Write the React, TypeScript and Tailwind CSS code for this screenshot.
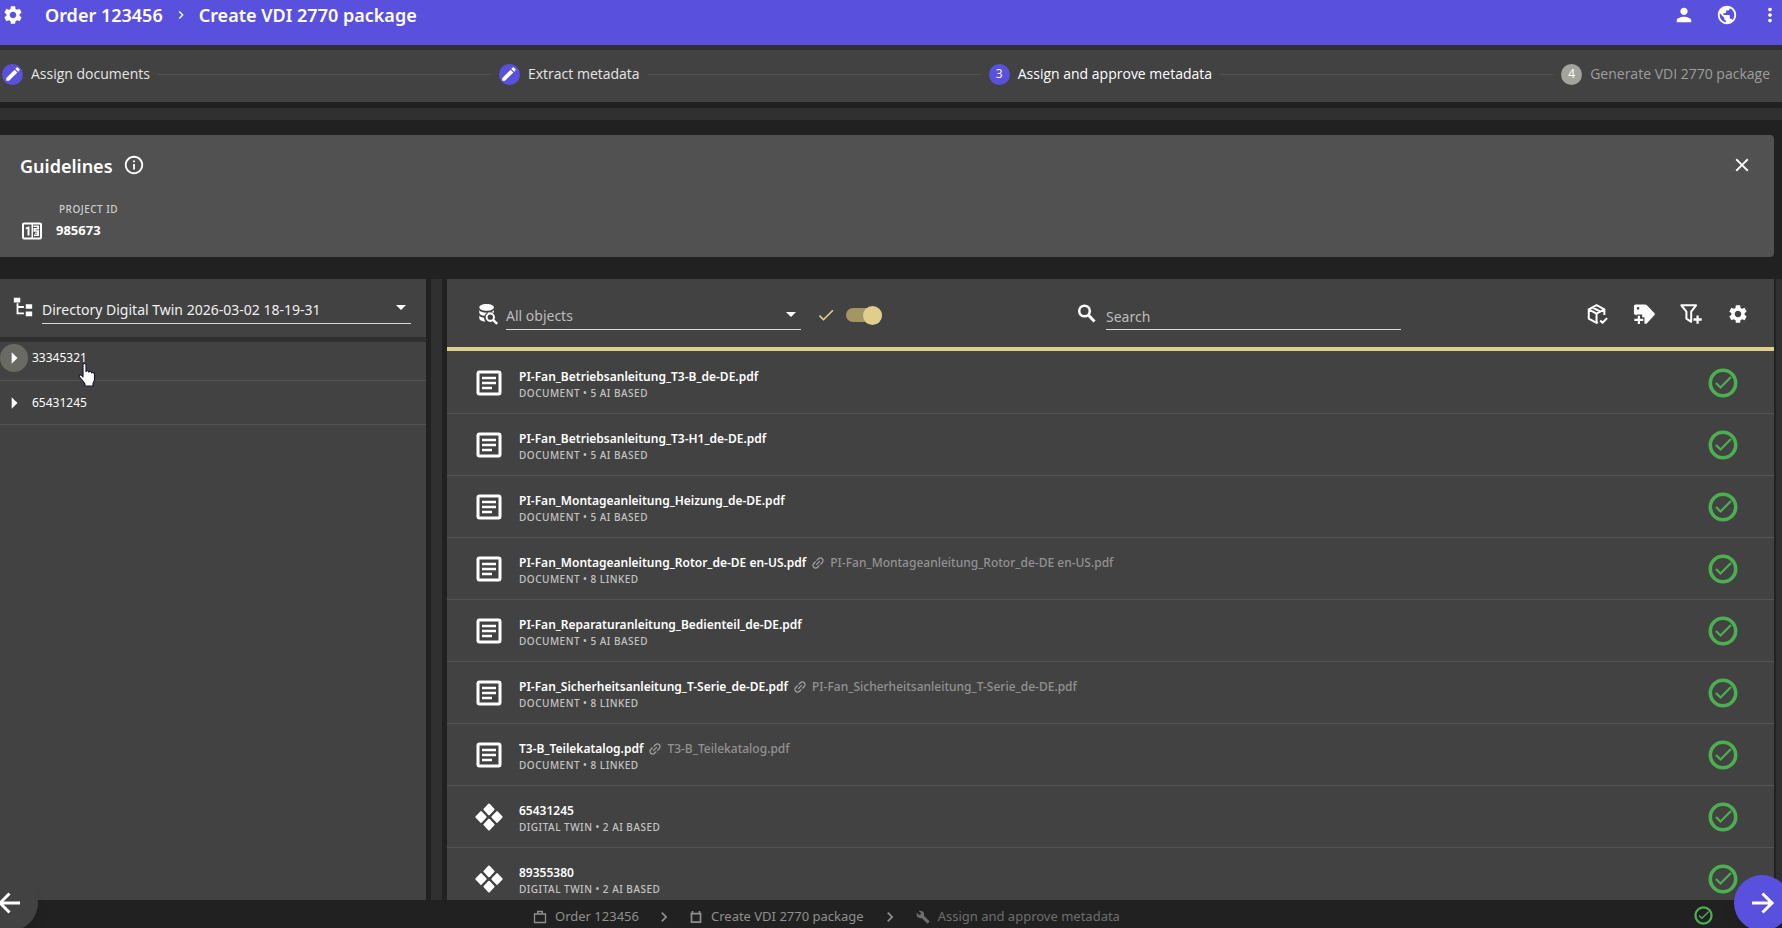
import React from 'react';
import { MdSettings, MdPerson, MdPublic, MdMoreVert, MdEdit, MdInfoOutline, MdClose, MdArrowDropDown, MdCheck, MdChevronRight, MdBuild, MdArrowRight, MdLink } from 'react-icons/md';

type IconProps = { className?: string };

const Counter = ({ className }: IconProps) => (
  <svg viewBox="0 0 24 24" className={className} fill="currentColor" aria-hidden="true">
    <path fillRule="evenodd" d="M4 3.500h16a2 2 0 0 1 2 2v13a2 2 0 0 1-2 2H4a2 2 0 0 1-2-2v-13c0-1.100.9-2 2-2m0 2v13h7.500v-13zm9 0v13h7v-13z" />
    <path d="M9.500 16.500h-2V9.800l-1.700.7V8.600L9.500 7.200zM13.500 6.500h5.500v3.900h-3.500v.8h3.500v5.900h-5v-1.500h3.200v-.8H15v-1.300h2.200v-.8h-3.700V9h3.700v-.9h-3.700z" />
  </svg>
);

const Tree = ({ className }: IconProps) => (
  <svg viewBox="0 0 24 24" className={className} fill="currentColor" aria-hidden="true">
    <path d="M2 2h7v5H2zm13 7h7v5h-7zm0 8h7v5h-7zm-2-4H7v5h6v2H5V8h2v3h6z" />
  </svg>
);

const DatabaseSearch = ({ className }: IconProps) => (
  <svg viewBox="0 0 24 24" className={className} fill="currentColor" aria-hidden="true">
    <path d="M10.500 1C6 1 2.500 2.600 2.500 4.700S6 8.500 10.500 8.500s8-1.700 8-3.800S15 1 10.500 1M2.500 7.500v3c0 1.700 2.300 3 5.600 3.500a6.800 6.800 0 0 1 6.400-4.200l4 .9V7.500c-.8 1.800-4 3-8 3s-7.200-1.200-8-3M2.500 13.500v3c0 1.800 2.700 3.300 6.500 3.600A7 7 0 0 1 7.700 16c-2.600-.4-4.500-1.300-5.200-2.500" />
    <circle cx="14.500" cy="15.500" r="4" fill="none" stroke="currentColor" strokeWidth="2.200" />
    <path d="M17.500 18.500l4.500 4.300" fill="none" stroke="currentColor" strokeWidth="2.600" />
  </svg>
);

const SearchIcon = ({ className }: IconProps) => (
  <svg viewBox="0 0 22 22" className={className} fill="none" stroke="currentColor" aria-hidden="true">
    <circle cx="8.500" cy="8" r="5.300" strokeWidth="2.500" />
    <path d="M12.300 12l6.200 6.500" strokeWidth="3" />
  </svg>
);

const ArrowIcon = ({ className }: IconProps) => (
  <svg viewBox="0 0 28 28" className={className} fill="none" stroke="currentColor" strokeWidth="3" aria-hidden="true">
    <path d="M4 14h19M14.500 4.500L24 14l-9.500 9.500" />
  </svg>
);

const PackageCheck = ({ className }: IconProps) => (
  <svg viewBox="0 0 24 24" className={className} fill="none" stroke="currentColor" strokeWidth="2.200" strokeLinejoin="round" aria-hidden="true">
    <path d="M20 13V7L11.500 2.400 3 7v10l8.500 4.700 1.500-.8M3 7l8.500 4.700L20 7M11.500 12v9.500M7.200 4.900l8.500 4.600" />
    <path d="M15.500 19l2.500 2.500 5-5" />
  </svg>
);

const TagPlus = ({ className }: IconProps) => (
  <svg viewBox="0 0 24 24" className={className} fill="currentColor" aria-hidden="true">
    <path fillRule="evenodd" d="M3 1.500h10.500c.6 0 1 .2 1.400.6l8.600 9.200c.5.600.5 1.300 0 1.900l-8 8.700c-.4.400-.8.600-1.400.6H12.500v-7H10V12.500H4V13.500L1 12V3.500c0-1.100.9-2 2-2m2.500 2.800a1.500 1.500 0 1 0 0 3 1.500 1.500 0 0 0 0-3" />
    <path d="M5.200 14h2.400v3.300h3.600v2.400H7.600V23H5.200v-3.300H1.500v-2.400h3.700z" />
  </svg>
);

const FilterPlus = ({ className }: IconProps) => (
  <svg viewBox="0 0 24 24" className={className} fill="none" stroke="currentColor" strokeWidth="2.200" strokeLinejoin="round" aria-hidden="true">
    <path d="M1.500 2.500h16l-5.300 7v11L7 17V9.500z" />
    <path d="M19.200 13.500v9M14.700 18h9" strokeWidth="2.500" />
  </svg>
);

const DocumentIcon = ({ className }: IconProps) => (
  <svg viewBox="0 0 28 28" className={className} fill="none" stroke="currentColor" strokeWidth="3" aria-hidden="true">
    <rect x="3" y="3" width="22" height="22" rx="1.500" />
    <path d="M7 9h14M7 14h14M7 19h10" strokeWidth="2.600" />
  </svg>
);

const TwinIcon = ({ className }: IconProps) => (
  <svg viewBox="0 0 28 28" className={className} fill="currentColor" stroke="currentColor" strokeWidth="2" strokeLinejoin="round" aria-hidden="true">
    <path d="M14 1.500l4.600 4.900-4.600 4.900-4.600-4.900zM14 16.700l4.600 4.900-4.600 4.900-4.600-4.900zM6 9.100l4.600 4.900L6 18.900 1.400 14zM22 9.100l4.600 4.900-4.600 4.900-4.600-4.900z" />
  </svg>
);

const Approved = ({ className }: IconProps) => (
  <svg viewBox="0 0 30 30" className={className} fill="none" stroke="currentColor" role="img" aria-label="Approved">
    <circle cx="15" cy="15" r="12.700" strokeWidth="3.600" />
    <path d="M8 15l4.500 4.500L23 9" strokeWidth="2.200" />
  </svg>
);

const Briefcase = ({ className }: IconProps) => (
  <svg viewBox="0 0 14 14" className={className} fill="none" stroke="currentColor" strokeWidth="1.300" aria-hidden="true">
    <path d="M1.500 4h11v8.500h-11zM4.700 4V1.500h4.600V4" />
  </svg>
);

const Clipboard = ({ className }: IconProps) => (
  <svg viewBox="0 0 14 14" className={className} fill="none" stroke="currentColor" strokeWidth="1.700" aria-hidden="true">
    <path d="M2.500 4v8.200h9V4M1.500 3.700h11M3.500 1v3M10.500 1v3" />
  </svg>
);

const HandPointer = ({ className }: IconProps) => (
  <svg viewBox="0 0 18 25" className={className} fill="white" stroke="#1b1b2b" strokeWidth="1.200" strokeLinejoin="round" aria-hidden="true">
    <path d="M5 2.500C5 .5 8 .5 8 2.500V9c.3-1.200 2.800-1 2.900.6.400-1.100 2.700-.8 2.800.8.700-.8 2.800-.3 2.800 1.400v5.200c0 1.800-1.500 3-1.500 4.500V23.500H7V22c0-1.700-3.400-4.300-5.500-7.500-1-1.700.8-2.800 2.100-1.600L5 14.300z" />
  </svg>
);

const steps = [
  { label: 'Assign documents', state: 'done' },
  { label: 'Extract metadata', state: 'done' },
  { label: 'Assign and approve metadata', state: 'current' },
  { label: 'Generate VDI 2770 package', state: 'pending' },
];

const rows: { name: string; meta: string; linked?: boolean; twin?: boolean }[] = [
  { name: 'PI-Fan_Betriebsanleitung_T3-B_de-DE.pdf', meta: 'DOCUMENT • 5 AI BASED' },
  { name: 'PI-Fan_Betriebsanleitung_T3-H1_de-DE.pdf', meta: 'DOCUMENT • 5 AI BASED' },
  { name: 'PI-Fan_Montageanleitung_Heizung_de-DE.pdf', meta: 'DOCUMENT • 5 AI BASED' },
  { name: 'PI-Fan_Montageanleitung_Rotor_de-DE en-US.pdf', meta: 'DOCUMENT • 8 LINKED', linked: true },
  { name: 'PI-Fan_Reparaturanleitung_Bedienteil_de-DE.pdf', meta: 'DOCUMENT • 5 AI BASED' },
  { name: 'PI-Fan_Sicherheitsanleitung_T-Serie_de-DE.pdf', meta: 'DOCUMENT • 8 LINKED', linked: true },
  { name: 'T3-B_Teilekatalog.pdf', meta: 'DOCUMENT • 8 LINKED', linked: true },
  { name: '65431245', meta: 'DIGITAL TWIN • 2 AI BASED', twin: true },
  { name: '89355380', meta: 'DIGITAL TWIN • 2 AI BASED', twin: true },
];

function Header() {
  return (
    <header className="flex h-[45px] shrink-0 items-start justify-between bg-[#5951de] pt-[3px] pr-px pl-0.5">
      <div className="flex h-6 items-center">
        <button aria-label="Settings"><MdSettings className="size-[22px]" /></button>
        <nav aria-label="Breadcrumb" className="ml-[21px] flex items-center text-lg font-semibold">
          <a href="#order">Order 123456</a>
          <MdChevronRight className="mx-2.5 size-4" />
          <a href="#package">Create VDI 2770 package</a>
        </nav>
      </div>
      <div className="flex h-6 items-center gap-[21px]">
        <button aria-label="Account"><MdPerson className="size-[22px]" /></button>
        <button aria-label="Language"><MdPublic className="size-[22px]" /></button>
        <button aria-label="More"><MdMoreVert className="size-[22px]" /></button>
      </div>
    </header>
  );
}

function Stepper() {
  return (
    <ol className="flex h-[57px] shrink-0 items-center gap-2 border-t-[5px] border-[#303030] bg-[#424242] pr-3 pb-1 pl-0.5 font-['Open_Sans',sans-serif] text-sm">
      {steps.map((step, i) => (
        <React.Fragment key={step.label}>
          {i > 0 && <li aria-hidden="true" className="h-px flex-1 bg-[#535353]" />}
          <li className={step.state === 'pending' ? 'flex items-center gap-2 text-[#9e9e9e]' : step.state === 'current' ? 'flex items-center gap-2 text-white' : 'flex items-center gap-2 text-[#e6e6e6]'}>
            <span className={step.state === 'pending' ? 'flex size-[21px] items-center justify-center rounded-full bg-[#a3a59d] text-xs text-white' : 'flex size-[21px] items-center justify-center rounded-full bg-[#5951de] text-xs text-white'}>
              {step.state === 'done' ? <MdEdit className="size-[18px]" /> : i + 1}
            </span>
            {step.label}
          </li>
        </React.Fragment>
      ))}
    </ol>
  );
}

function Guidelines() {
  return (
    <section className="mr-2 flex h-[122px] shrink-0 flex-col rounded-r bg-[#515151] pt-[18px] pr-[21px] pl-5">
      <div className="flex h-6 items-center">
        <h2 className="pt-0.5 text-lg font-semibold">Guidelines</h2>
        <button aria-label="About guidelines" className="ml-2.5"><MdInfoOutline className="size-[22px]" /></button>
        <button aria-label="Close" className="ml-auto"><MdClose className="size-[22px]" /></button>
      </div>
      <dl className="mt-[26px]">
        <dt className="pl-[39px] text-[10px] leading-3 font-medium tracking-wider text-[#cfcfcf]">PROJECT ID</dt>
        <dd className="mt-1 flex items-center gap-3 text-[13px] font-bold"><Counter className="size-6" />985673</dd>
      </dl>
    </section>
  );
}

function DirectoryPanel() {
  return (
    <aside className="flex w-[426px] shrink-0 flex-col bg-[#424242]">
      <div className="flex h-[63px] shrink-0 items-start border-b-[5px] border-[#303030] pt-[17px] pr-[15px] pl-3">
        <Tree className="size-[22px]" />
        <div className="relative ml-2 flex-1">
          <select aria-label="Directory" className="h-7 w-full appearance-none border-b border-[#d8d8d8] bg-transparent text-sm text-[#f0f0f0]">
            <option>Directory Digital Twin 2026-03-02 18-19-31</option>
          </select>
          <MdArrowDropDown className="pointer-events-none absolute -top-px -right-0.5 size-6" />
        </div>
      </div>
      <ul className="text-xs">
        <li className="relative flex h-[39px] items-center border-b border-[#535353] pb-1.5">
          <button aria-label="Expand 33345321" className="flex size-7 items-center justify-center rounded-full bg-[#6a6a65]"><MdArrowRight className="size-7" /></button>
          <span className="ml-1">33345321</span>
          <HandPointer className="absolute top-5 left-[78px] h-[26px] w-[18px]" />
        </li>
        <li className="flex h-11 items-center border-b border-[#535353]">
          <button aria-label="Expand 65431245" className="flex size-7 items-center justify-center"><MdArrowRight className="size-7" /></button>
          <span className="ml-1">65431245</span>
        </li>
      </ul>
    </aside>
  );
}

function ObjectsPanel() {
  return (
    <main className="flex min-w-0 flex-1 flex-col overflow-hidden bg-[#424242]">
      <div className="flex h-[72px] shrink-0 items-start border-b-4 border-[#e0ce8c] pt-6 pr-[25px] pl-[30px]">
        <DatabaseSearch className="size-[22px]" />
        <div className="relative ml-[7px] w-[295px]">
          <select aria-label="Object filter" className="h-[27px] w-full appearance-none border-b border-[#d8d8d8] bg-transparent text-sm text-[#bdbdbd]">
            <option>All objects</option>
          </select>
          <MdArrowDropDown className="pointer-events-none absolute -top-px -right-0.5 size-6" />
        </div>
        <label className="ml-[15px] flex h-6 items-center gap-2.5 text-[#e0ce8c]">
          <MdCheck className="size-5" />
          <input type="checkbox" role="switch" defaultChecked aria-label="Approved only" className="peer sr-only" />
          <span className="flex h-3.5 w-9 items-center justify-end rounded-full bg-[#a39664]"><span className="size-[19px] rounded-full bg-[#e0ce8c]" /></span>
        </label>
        <SearchIcon className="ml-[194px] size-[22px]" />
        <input type="search" aria-label="Search" placeholder="Search" className="ml-2 h-[27px] w-[295px] border-b border-[#d8d8d8] bg-transparent text-sm outline-none placeholder:text-[#bdbdbd]" />
        <div className="ml-auto flex gap-[25px]">
          <button aria-label="Check package"><PackageCheck className="size-[22px]" /></button>
          <button aria-label="Add tag"><TagPlus className="size-[22px]" /></button>
          <button aria-label="Add filter"><FilterPlus className="size-[22px]" /></button>
          <button aria-label="List settings"><MdSettings className="size-[22px]" /></button>
        </div>
      </div>
      <ul className="min-h-0 flex-1 overflow-hidden pt-px">
        {rows.map((row) => (
          <li key={row.name} className="flex h-[62px] items-center border-b border-[#535353] pr-9 pl-7">
            {row.twin ? <TwinIcon className="h-7 w-7" /> : <DocumentIcon className="h-7 w-7" />}
            <div className="ml-4 pt-1">
              <div className="flex h-4 items-center text-xs">
                <span className="font-semibold">{row.name}</span>
                {row.linked && <><MdLink className="mx-1 size-4 -rotate-45 text-[#a0a0a0]" /><span className="font-medium text-[#929292]">{row.name}</span></>}
              </div>
              <div className="text-[10px] leading-4 font-medium tracking-wider text-[#c4c4c4]">{row.meta}</div>
            </div>
            <Approved className="ml-auto size-[30px] text-[#4caf50]" />
          </li>
        ))}
      </ul>
    </main>
  );
}

function Footer() {
  return (
    <footer className="flex h-7 shrink-0 items-center bg-[#212121] pt-0.5 pr-[69px] pl-[533px] text-[13px] text-[#8f8f8f]">
      <nav aria-label="Process" className="flex items-center pt-[3px]">
        <a href="#order" className="flex items-center gap-2"><Briefcase className="size-3.5" />Order 123456</a>
        <MdChevronRight className="mx-[15px] size-5" />
        <a href="#package" className="flex items-center gap-2"><Clipboard className="size-3.5" />Create VDI 2770 package</a>
        <MdChevronRight className="mx-4 size-5" />
        <span className="flex items-center gap-2 text-[#6e6e6e]"><MdBuild className="size-3.5" />Assign and approve metadata</span>
      </nav>
      <Approved className="ml-auto size-[19px] text-[#4caf50]" />
    </footer>
  );
}

export default function App() {
  return (
    <div className="relative flex h-screen flex-col overflow-hidden bg-[#212121] font-['Noto_Sans',sans-serif] text-white">
      <Header />
      <Stepper />
      <div className="mt-1.5 mb-[15px] h-3 shrink-0 bg-[#303030]" />
      <Guidelines />
      <div className="mt-[22px] flex min-h-0 flex-1">
        <DirectoryPanel />
        <div className="w-[21px] shrink-0 border-x-[5px] border-[#212121] bg-[#303030]" />
        <ObjectsPanel />
        <div className="w-2 shrink-0 border-l-2 border-[#212121] bg-[#303030]" />
      </div>
      <Footer />
      <button aria-label="Back" className="absolute -bottom-[3px] -left-[18px] flex size-14 items-center justify-center rounded-full bg-[#424242] shadow-lg"><ArrowIcon className="size-7 rotate-180" /></button>
      <button aria-label="Next" className="absolute -right-2 -bottom-[3px] flex size-14 items-center justify-center rounded-full bg-[#5951de] shadow-lg"><ArrowIcon className="size-7" /></button>
    </div>
  );
}
